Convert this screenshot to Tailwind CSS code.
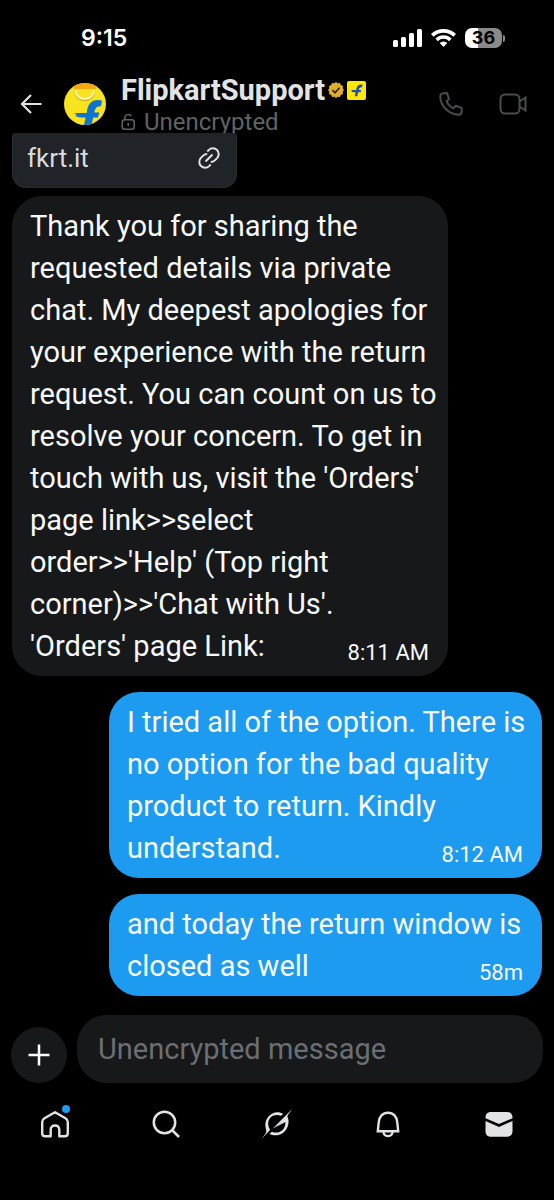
<!DOCTYPE html>
<html lang="en">
<head>
    <meta charset="UTF-8">
    <meta name="viewport" content="width=device-width, initial-scale=1.0">
    <title>FlipkartSupport - Messages</title>
    <script src="https://cdn.jsdelivr.net/npm/@tailwindcss/browser@4"></script>
</head>
<body class="bg-black text-[#e2e3e4] font-['Roboto','Liberation_Sans',sans-serif]">
    <div class="min-h-screen flex flex-col">

        <!-- Status bar -->
        <div class="flex items-center justify-between pl-[81px] pr-[49px] pt-[26px] h-[50px] text-white">
            <span class="font-['Inter',sans-serif] font-semibold text-[23px] leading-7">9:15</span>
            <div class="flex items-center gap-[9px]">
                <svg class="w-[29px] h-[18px]" viewBox="0 0 29 18" fill="#fff">
                    <rect x="0" y="11" width="5" height="7" rx="1.5"/>
                    <rect x="8" y="8" width="5" height="10" rx="1.5"/>
                    <rect x="16" y="4" width="5" height="14" rx="1.5"/>
                    <rect x="24" y="0" width="5" height="18" rx="1.5"/>
                </svg>
                <svg class="w-[25px] h-[18px]" viewBox="0 0 25 18" fill="none" stroke="#fff" stroke-width="3.6">
                    <path d="M1.300 6.400a16 16 0 0 1 22.400 0"/>
                    <path d="M5.600 10.900a9.800 9.800 0 0 1 13.800 0"/>
                    <path d="M12.500 18l-3.800-3.900a5.400 5.400 0 0 1 7.600 0z" fill="#fff" stroke="none"/>
                </svg>
                <div class="flex items-center gap-px">
                    <div class="w-[37px] h-5 rounded-[7px] bg-linear-to-r from-white from-36% to-[#8a8a8a] to-36% text-black text-center font-['Inter',sans-serif] font-bold text-[18px] leading-5">36</div>
                    <div class="w-[2px] h-[7px] rounded-r-full bg-[#8a8a8a]"></div>
                </div>
            </div>
        </div>

        <!-- Chat header -->
        <header class="flex items-center pl-5 pr-[27px] pt-6 h-[83px]">
            <button aria-label="Back" class="mr-[22px]">
                <svg class="w-[22px] h-[22px]" viewBox="0 0 22 22" fill="none" stroke="#e2e3e4" stroke-width="2.2"><path d="M21.500 11H2.200M11 2L2 11l9 9"/></svg>
            </button>
            <svg class="w-[42px] h-[42px] mr-[15px]" viewBox="0 0 42 42">
                <clipPath id="avatar"><circle cx="21" cy="21" r="21"/></clipPath>
                <g clip-path="url(#avatar)">
                    <rect width="42" height="42" fill="#f7e31f"/>
                    <path d="M8 0h26l-2 6H10z" fill="#f5a714"/>
                    <path d="M11.500 8.500a9.200 8.500 0 0 0 18.400 0" fill="none" stroke="#d8b51a" stroke-width="2.500"/>
                    <path d="M11.500 7.500a9.200 8.500 0 0 0 18.400 0" fill="none" stroke="#fff7c2" stroke-width="2"/>
                    <path d="M38 17.500c-7-2-13 1-14.500 8l-.8 4.500H10l3 2-2 1 5 1.500h5.500L20 42h7.500l1.700-7.500H34l1.300-5h-5c.8-4.500 2.500-6.500 6.700-6.300z" fill="#0f73d0"/>
                </g>
            </svg>
            <div class="flex-1 pt-[5px]">
                <div class="flex items-center gap-[3px]">
                    <h1 class="font-bold text-[29px] leading-8">FlipkartSupport</h1>
                    <svg class="w-4 h-4" viewBox="0 0 16 16">
                        <path d="M8 0l1.700 1.300L12 1l.8 2L15 4l-.3 2.300L16 8l-1.300 1.700L15 12l-2.200 1-.8 2-2.300-.3L8 16l-1.700-1.300L4 15l-.8-2L1 12l.3-2.300L0 8l1.300-1.700L1 4l2.200-1L4 1l2.300.3z" fill="#dfae2c"/>
                        <path d="M4.500 8.200l2.500 2.500 4.500-5" fill="none" stroke="#33250a" stroke-width="1.700"/>
                    </svg>
                    <svg class="w-[19px] h-[19px]" viewBox="0 0 19 19">
                        <rect width="19" height="19" rx="2" fill="#ffe60b"/>
                        <path d="M15.500 3.600c-3.400-.6-5.200.5-5.900 3.400L9.200 9H3.800l1.500.9-.9.500 2 .8h2.300l-.9 4.100h2.500l.9-4.100h2.500l.4-2.100h-2.400c.4-2.300 1.300-3.100 3.400-2.900z" fill="#1d4fb5"/>
                    </svg>
                </div>
                <div class="flex items-center gap-2 text-[#606366]">
                    <svg class="w-[15px] h-[18px]" viewBox="0 0 15 18" fill="none" stroke="#606366" stroke-width="1.500">
                        <rect x="1.200" y="6.800" width="12" height="9.500" rx="2.500"/>
                        <path d="M3.800 6.500V5a3.500 3.500 0 0 1 6.500-1.800M7.200 10v3"/>
                    </svg>
                    <span class="text-[24px] leading-8">Unencrypted</span>
                </div>
            </div>
            <button aria-label="Call" class="mr-9">
                <svg class="w-6 h-6" viewBox="0 0 24 24" fill="none" stroke="#4a4c4e" stroke-width="2" stroke-linejoin="round"><path d="M4.500 1.300L8 1.100l2 5.800-2.500 2.300c1.500 3.300 3.800 5.700 7 7.100l2.300-2.600 5.900 2.200v3.500c0 2-1.200 3.300-3.200 3.300C9.800 22.400 1.300 14 1.300 4.600c0-2 1.200-3.300 3.200-3.300z"/></svg>
            </button>
            <button aria-label="Video call">
                <svg class="w-7 h-6" viewBox="0 0 28 24" fill="none" stroke="#4a4c4e" stroke-width="2"><rect x="1.500" y="2.500" width="19" height="19" rx="4.500"/><path d="M20.500 9.500l6-4v13l-6-4"/></svg>
            </button>
        </header>

        <!-- Messages -->
        <main class="flex-1 flex flex-col items-start px-3 text-[29px] leading-[42px] text-[#f7f9f9]">
            <a href="#" class="flex items-center justify-between w-[225px] h-[55px] pl-[14px] pr-4 pb-1 mb-2 rounded-t-[4px] rounded-b-[14px] bg-[#202327] border border-t-0 border-[#2a2d31] text-[26px] leading-8 text-[#d9dbdc]">
                fkrt.it
                <svg class="w-[22px] h-[22px]" viewBox="0 0 22 22" fill="none" stroke="#e1e3e4" stroke-width="2"><path d="M9.300 4.500l1.600-1.600a5.800 5.800 0 0 1 8.200 8.200l-2.300 2.300a5.800 5.800 0 0 1-4 1.700M12.700 17.500l-1.600 1.600a5.800 5.800 0 0 1-8.200-8.200l2.300-2.300a5.800 5.800 0 0 1 4-1.700M7.500 14.500l7-7"/></svg>
            </a>

            <div class="grid grid-cols-[minmax(0,1fr)] max-w-[436px] w-full mb-4 pl-[18px] pr-[19px] py-[9px] rounded-[30px] bg-[#16181a]">
                <p class="col-start-1 row-start-1 whitespace-nowrap">Thank you for sharing the<br>requested details via private<br>chat. My deepest apologies for<br>your experience with the return<br>request. You can count on us to<br>resolve your concern. To get in<br>touch with us, visit the 'Orders'<br>page link&gt;&gt;select<br>order&gt;&gt;'Help' (Top right<br>corner)&gt;&gt;'Chat with Us'.<br>'Orders' page Link:</p>
                <time class="col-start-1 row-start-1 self-end justify-self-end text-[22px] leading-7">8:11 AM</time>
            </div>

            <div class="grid grid-cols-[minmax(0,1fr)] self-end max-w-[433px] w-full mb-4 pl-[18px] pr-[19px] py-[9px] rounded-[30px] bg-[#1d9bf0]">
                <p class="col-start-1 row-start-1 whitespace-nowrap">I tried all of the option. There is<br>no option for the bad quality<br>product to return. Kindly<br>understand.</p>
                <time class="col-start-1 row-start-1 self-end justify-self-end text-[22px] leading-7">8:12 AM</time>
            </div>

            <div class="grid grid-cols-[minmax(0,1fr)] self-end max-w-[433px] w-full pl-[18px] pr-[19px] py-[9px] rounded-[30px] bg-[#1d9bf0]">
                <p class="col-start-1 row-start-1 whitespace-nowrap">and today the return window is<br>closed as well</p>
                <time class="col-start-1 row-start-1 self-end justify-self-end text-[22px] leading-7">58m</time>
            </div>
        </main>

        <!-- Composer -->
        <form class="flex items-end gap-[10px] px-[11px]">
            <button type="button" aria-label="Add attachment" class="flex items-center justify-center w-14 h-14 rounded-full bg-[#16181a]">
                <svg class="w-[22px] h-[22px]" viewBox="0 0 22 22" stroke="#fff" stroke-width="2.500"><path d="M11 .5v21M.5 11h21"/></svg>
            </button>
            <input type="text" aria-label="Message" placeholder="Unencrypted message" class="flex-1 min-w-0 h-[68px] px-[21px] rounded-[30px] bg-[#16181a] text-[29px] placeholder:text-[#6b6f73]">
        </form>

        <!-- Tab bar -->
        <nav class="grid grid-cols-5 justify-items-center items-start pt-[26px] h-[117px]">
            <a href="#" aria-label="Home" class="relative">
                <svg class="w-[30px] h-[30px]" viewBox="0 0 30 30" fill="none" stroke="#e2e3e4" stroke-width="2.400" stroke-linejoin="round"><path d="M4.500 9.300L15 3.300l10.500 6c1.500.9 2.300 2 2.300 3.700v11.200c0 2-1 3-3 3h-5.500V20.500c0-2.500-1.600-4-4.300-4s-4.300 1.500-4.300 4v6.700H5.200c-2 0-3-1-3-3V13c0-1.700.8-2.800 2.300-3.700z"/></svg>
                <span class="absolute -top-1 right-0 w-2 h-2 rounded-full bg-[#1d9bf0]"></span>
            </a>
            <a href="#" aria-label="Search">
                <svg class="w-[30px] h-[30px]" viewBox="0 0 30 30" fill="none" stroke="#e2e3e4" stroke-width="2.500"><circle cx="13.500" cy="13.500" r="10.700"/><path d="M21 21l7 7"/></svg>
            </a>
            <a href="#" aria-label="Grok">
                <svg class="w-8 h-[30px]" viewBox="0 0 32 30" fill="#e2e3e4">
                    <path d="M12 19.500L26.500 7.800c3 6.700-.6 14.200-6.300 17.200-3.800 2-8.300 1.700-11.700-.2l2.400-2.100c6 2.600 13.800-.8 13.500-9.700z"/>
                    <path d="M1 29.500c2-3.500 5.200-5.200 4-9.500-2-6 .7-12.500 6-15.300 3.800-2 8-1.700 11.200.2l-2.300 1.800C14 4.300 7 7.500 7.200 15c.1 2.500 1 4 1.800 6z"/>
                    <path d="M11.500 19.800L31 .3c-2 3.200-4.500 5-5 8.500z"/>
                </svg>
            </a>
            <a href="#" aria-label="Notifications">
                <svg class="w-[30px] h-[30px]" viewBox="0 0 30 30" fill="none" stroke="#e2e3e4" stroke-width="2.400"><path d="M5.700 13.500C6 7.500 9.800 3.700 15 3.700s9 3.800 9.300 9.800l.9 8.800H4.800z"/><path d="M10.300 22.500c.3 2.900 2 4.600 4.700 4.600s4.400-1.700 4.700-4.600"/></svg>
            </a>
            <a href="#" aria-label="Messages">
                <svg class="w-[30px] h-[30px]" viewBox="0 0 30 30" fill="#e2e3e4"><path d="M1.500 9.200V8.500c0-3.300 2-5.500 5.500-5.500h16c3.500 0 5.500 2.200 5.500 5.500v.7L15 15z"/><path d="M1.500 11.900L15 17.900l13.500-6v10.300c0 3.300-2 5.500-5.500 5.500H7c-3.500 0-5.500-2.200-5.500-5.500z"/></svg>
            </a>
        </nav>
    </div>
</body>
</html>
